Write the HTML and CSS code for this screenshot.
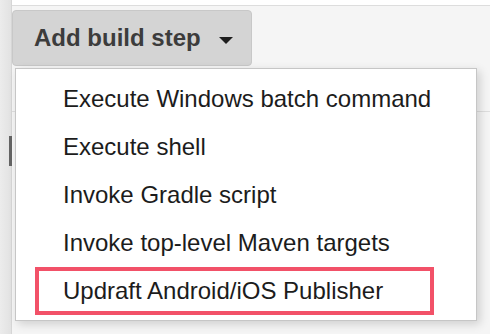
FILE: index.html
```html
<!DOCTYPE html>
<html lang="en">
<head>
    <meta charset="UTF-8">
    <meta name="viewport" content="width=device-width, initial-scale=1.0">
    <title>Add build step</title>

    <link rel="stylesheet" href="styles.css">
</head>
<body>

    <div class="frame">
        <div class="rail">
            <span class="railMark"></span>
        </div>

        <div class="main">
            <div class="topbar"></div>

            <div class="content">
                <button class="addStep">Add build step <span class="caret"></span></button>

                <div class="stage">
                    <div class="stepRow"></div>

                    <ul class="menu">
                        <li>Execute Windows batch command</li>
                        <li>Execute shell</li>
                        <li>Invoke Gradle script</li>
                        <li>Invoke top-level Maven targets</li>
                        <li class="highlight">Updraft Android/iOS Publisher</li>
                    </ul>
                </div>
            </div>
        </div>
    </div>

</body>
</html>
```

FILE: styles.css
```css
body {
    margin: 0;
    background-color: rgb(244, 244, 244);
    font-family: "Liberation Sans", Arial, sans-serif;
    overflow: hidden;
}

.frame {
    display: flex;
    height: 334px;
}

.rail {
    width: 11px;
    background: linear-gradient(to right, rgb(236, 236, 236), rgb(226, 226, 226));
    border-right: 1px solid rgb(214, 214, 214);
    display: flex;
    flex-direction: column;
}

.railMark {
    display: block;
    width: 3px;
    height: 30px;
    margin: 136px 0 0 9px;
    background-color: rgb(100, 100, 100);
}

.main {
    flex: 1;
    display: flex;
    flex-direction: column;
}

.topbar {
    height: 5px;
    background-color: white;
    border-bottom: 1px solid rgb(221, 221, 221);
}

.content {
    flex: 1;
    padding-top: 4px;
    background-color: rgb(245, 245, 245);
}

.addStep {
    display: flex;
    align-items: center;
    width: 240px;
    height: 56px;
    box-sizing: border-box;
    margin: 0;
    padding: 0 0 0 21px;
    background-color: rgb(212, 212, 212);
    border: 1px solid rgb(200, 200, 200);
    border-radius: 4px;
    color: rgb(60, 60, 60);
    font-family: "Liberation Sans", Arial, sans-serif;
    font-size: 24px;
    font-weight: bold;
    cursor: pointer;
}

.caret {
    width: 0;
    height: 0;
    margin: 4px 0 0 18px;
    border-left: 7.5px solid transparent;
    border-right: 7.5px solid transparent;
    border-top: 7px solid rgb(30, 30, 30);
}

.stage {
    position: relative;
    padding-top: 45px;
}

.stepRow {
    height: 200px;
    border-top: 1px solid rgb(222, 222, 222);
}

.menu {
    position: absolute;
    top: 2px;
    left: 3px;
    width: 460px;
    margin: 0;
    padding: 6px 0 5px;
    list-style-type: none;
    background-color: white;
    border: 1px solid rgb(198, 198, 198);
    box-shadow: 3px 3px 9px rgba(0, 0, 0, 0.16);
}

.menu li {
    height: 48px;
    line-height: 48px;
    padding-left: 47px;
    font-size: 24px;
    color: rgb(28, 28, 28);
    cursor: pointer;
    white-space: nowrap;
}

.menu li.highlight {
    box-sizing: border-box;
    width: 399px;
    margin-left: 19px;
    padding-left: 24px;
    line-height: 40px;
    border: 4px solid rgb(242, 81, 104);
}
```
